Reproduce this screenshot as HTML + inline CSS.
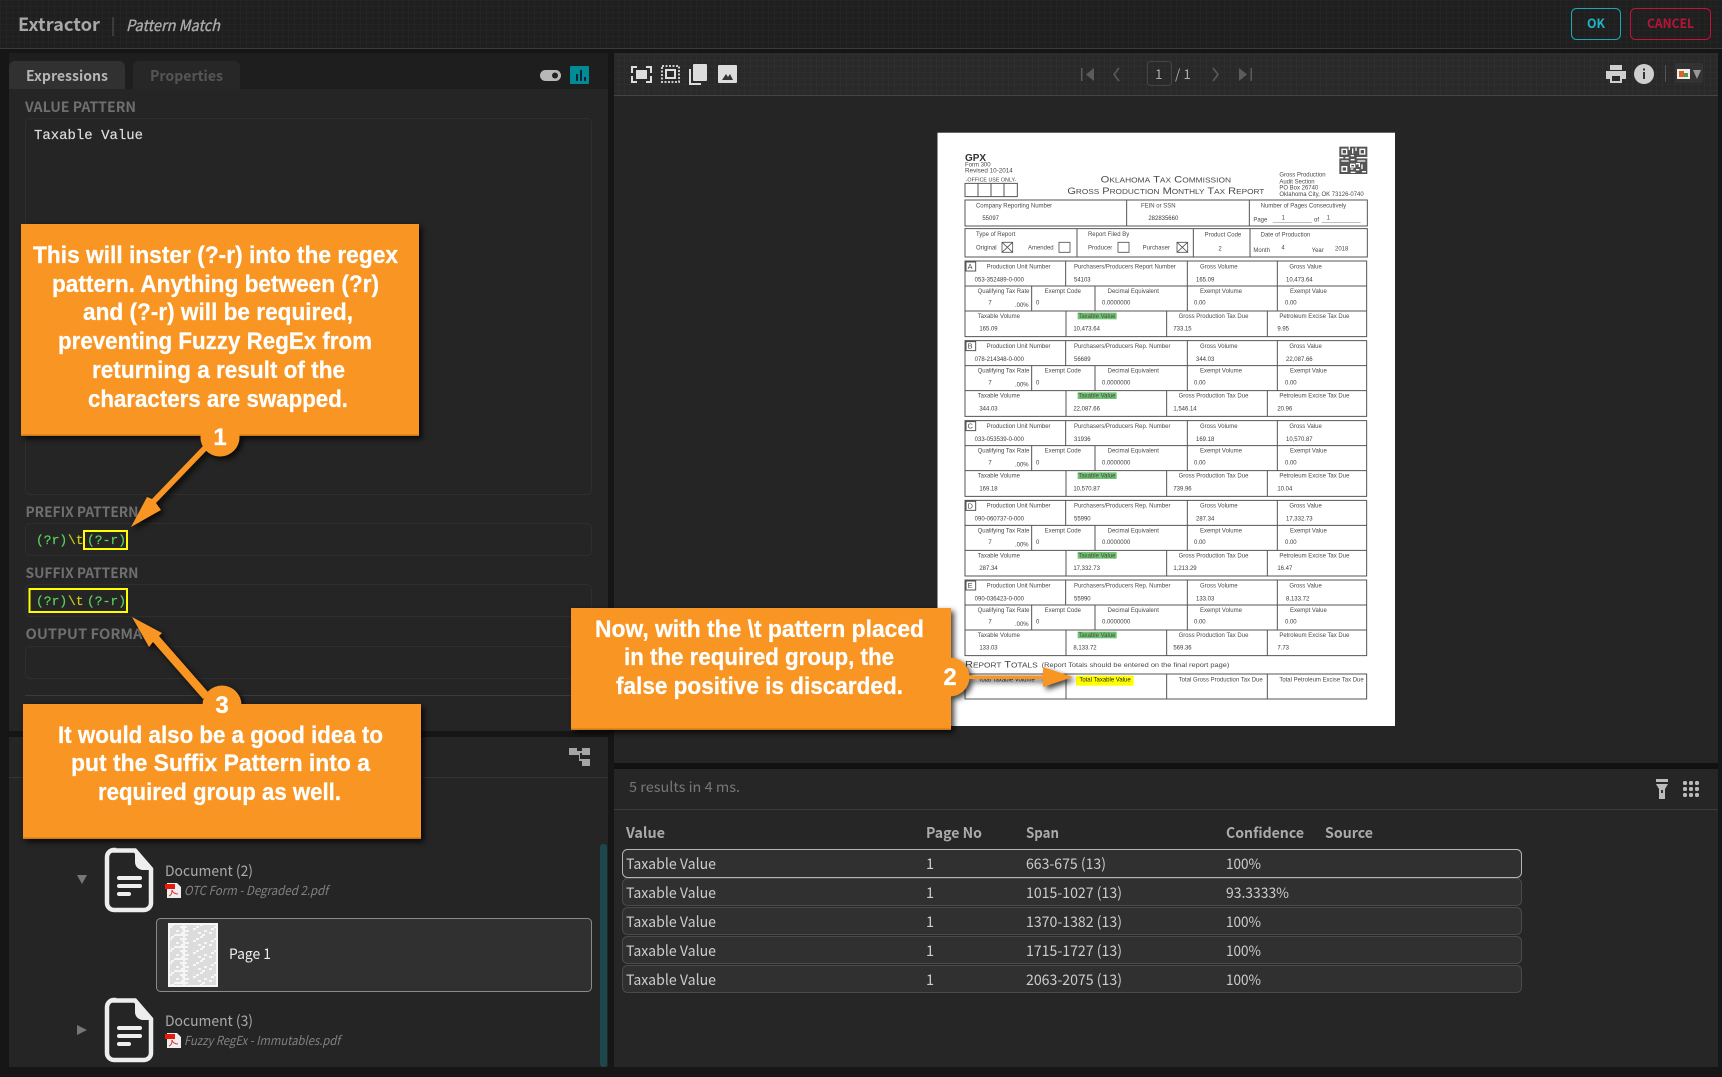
<!DOCTYPE html>
<html><head><meta charset="utf-8"><title>Extractor</title>
<style>
html,body{margin:0;padding:0;background:#161616;width:1722px;height:1077px;overflow:hidden}
svg{display:block;position:absolute;left:0;top:0}
text{font-family:"Noto Sans CJK JP","Liberation Sans",sans-serif;white-space:pre}
.m{font-family:"Liberation Mono",monospace;font-size:13px;stroke-width:.2}
.gr{fill:#5cd05c;stroke:#5cd05c}
.ye{fill:#c8c81e;stroke:#c8c81e}
.o{font-family:"Liberation Sans",sans-serif;font-weight:700;font-size:24px;fill:#fff;stroke:#fff;stroke-width:.25}
.lb{font-weight:700;font-size:14px;fill:#6f6f6f}
.t{font-size:14.5px;fill:#ccc}
.h{font-size:14.5px;font-weight:700;fill:#aaa}
.f text{font-family:"Liberation Sans",sans-serif;font-size:18px;fill:#4a4a4a}
.f .v{fill:#3c3c3c}
.sh{filter:drop-shadow(3px 3px 3px rgba(0,0,0,.75))}
</style></head><body>
<svg width="1722" height="1077" viewBox="0 0 1722 1077" xmlns="http://www.w3.org/2000/svg">
<defs>
<pattern id="g" width="6" height="6" patternUnits="userSpaceOnUse"><path d="M0 .5H6M.5 0V6" stroke="#fff" stroke-opacity=".022" fill="none"/></pattern>
<filter id="bl" x="-2%" y="-2%" width="104%" height="104%"><feGaussianBlur stdDeviation="1.1"/></filter>
<pattern id="th" width="46" height="12" patternUnits="userSpaceOnUse"><path d="M1 1H16M19 1H33M36 1H45M3 3H12M15 3H30M34 3H42M1 5H9M12 5H27M30 5H44M5 7H20M23 7H38M41 7H45M1 9H14M17 9H25M28 9H43M4 11H18M21 11H36" stroke="#b0b0b0" stroke-width=".8"/></pattern>
</defs>
<rect width="1722" height="1077" fill="#161616"/>
<!-- title bar -->
<rect width="1722" height="48" fill="#1f1f1f"/><rect width="1722" height="48" fill="url(#g)"/>
<rect y="48" width="1722" height="1" fill="#3a3a3a"/>
<text x="18" y="31" font-size="18" font-weight="700" fill="#a8a8a8" textLength="82" lengthAdjust="spacingAndGlyphs">Extractor</text>
<rect x="112.500" y="17" width="1" height="19" fill="#555"/>
<text x="126" y="31" font-size="15.500" font-style="italic" fill="#aaa" stroke="#aaa" stroke-width=".35" textLength="94" lengthAdjust="spacingAndGlyphs">Pattern Match</text>
<rect x="1571.500" y="8.500" width="49" height="31" rx="5" fill="none" stroke="#1ba9b8"/>
<text x="1587" y="28" font-size="13" font-weight="700" fill="#1fb5c4" textLength="18" lengthAdjust="spacingAndGlyphs">OK</text>
<rect x="1630.500" y="8.500" width="80" height="31" rx="5" fill="none" stroke="#c0143c"/>
<text x="1647" y="28" font-size="13" font-weight="700" fill="#b81438" textLength="47" lengthAdjust="spacingAndGlyphs">CANCEL</text>

<!-- left top panel -->
<rect x="9" y="53" width="599" height="678" fill="#252525"/>
<rect x="9" y="53" width="599" height="36" fill="#1e1e1e"/>
<path d="M9 89V67a6 6 0 0 1 6-6H119a6 6 0 0 1 6 6V89Z" fill="#313131"/>
<path d="M133 89V67a6 6 0 0 1 6-6H234a6 6 0 0 1 6 6V89Z" fill="#272727"/>
<text x="26" y="81" font-size="14.500" font-weight="700" fill="#b5b5b5" textLength="82" lengthAdjust="spacingAndGlyphs">Expressions</text>
<text x="150" y="81" font-size="14.500" font-weight="700" fill="#555" textLength="73" lengthAdjust="spacingAndGlyphs">Properties</text>
<rect x="540" y="70" width="21" height="11" rx="5.500" fill="#b8b8b8"/><circle cx="555" cy="75.500" r="3" fill="#222"/>
<rect x="570" y="66" width="19" height="18" rx="1" fill="#008c96"/>
<path d="M576 81V74h2v7ZM580 81V70h2v11ZM584 81V77h2v4Z" fill="#123"/>
<text class="lb" x="25" y="112" textLength="111" lengthAdjust="spacingAndGlyphs">VALUE PATTERN</text>
<rect x="25.500" y="118.500" width="566" height="376" rx="5" fill="none" stroke="#2e2e2e"/>
<text class="m" x="34" y="139" fill="#ddd" stroke="#ddd" style="font-size:14px" textLength="109" lengthAdjust="spacingAndGlyphs">Taxable Value</text>
<text class="lb" x="25.500" y="517" textLength="113" lengthAdjust="spacingAndGlyphs">PREFIX PATTERN</text>
<rect x="25.500" y="523.500" width="566" height="32" rx="5" fill="none" stroke="#2e2e2e"/>
<text class="m gr" x="36" y="544">(?r)</text><text class="m ye" x="68" y="544">\t</text><text class="m gr" x="87" y="544">(?-r)</text>
<rect x="84" y="531" width="43" height="18" fill="none" stroke="#ff0" stroke-width="2"/>
<text class="lb" x="25.500" y="578" textLength="113" lengthAdjust="spacingAndGlyphs">SUFFIX PATTERN</text>
<rect x="25.500" y="584.500" width="566" height="32" rx="5" fill="none" stroke="#2e2e2e"/>
<text class="m gr" x="36" y="605">(?r)</text><text class="m ye" x="68" y="605">\t</text><text class="m gr" x="87" y="605">(?-r)</text>
<rect x="29.500" y="589" width="97.500" height="23" fill="none" stroke="#ff0" stroke-width="2"/>
<text class="lb" x="25.500" y="639" textLength="125" lengthAdjust="spacingAndGlyphs">OUTPUT FORMAT</text>
<rect x="25.500" y="646.500" width="566" height="32" rx="5" fill="none" stroke="#2e2e2e"/>
<rect x="25" y="695" width="566" height="1" fill="#3a3a3a"/>

<!-- left bottom panel -->
<rect x="9" y="737" width="599" height="330" fill="#252525"/>
<rect x="9" y="777" width="599" height="1" fill="#333"/>
<path d="M569 748h8v3h5v-3h8v7h-8v-2h-2v6h2v-2h0v2h8v7h-8v-5h-3V755h-2h-8Z" fill="#a5a5a5"/>
<rect x="600" y="844" width="7" height="223" rx="3" fill="#1b484c"/>
<path d="M77 875h10l-5 9Z" fill="#777"/>
<g id="d1">
<path d="M114 850.500H135L151 869V903a7 7 0 0 1-7 7H114a7 7 0 0 1-7-7V857a7 7 0 0 1 7-7Z" fill="none" stroke="#eee" stroke-width="4.500"/>
<path d="M135 850L152 870H143a8 8 0 0 1-8-8Z" fill="#eee"/>
<path d="M119 878h21M119 886h21M119 894h10" stroke="#eee" stroke-width="4" stroke-linecap="round"/>
</g>
<text x="165" y="876" font-size="14.500" fill="#aaa" textLength="88" lengthAdjust="spacingAndGlyphs">Document (2)</text>
<path d="M167 883h10l4 4v11h-14Z" fill="#eee"/><rect x="165" y="884" width="10" height="5" fill="#e8180c"/><path d="M172 890c0 4-1 5-3 6M172 890c1 3 3 4 6 4" stroke="#d33" fill="none"/>
<text x="184" y="895" font-size="12.500" font-style="italic" fill="#808080" textLength="144" lengthAdjust="spacingAndGlyphs">OTC Form - Degraded 2.pdf</text>
<rect x="156.500" y="918.500" width="435" height="73" rx="4" fill="#303030" stroke="#8a8a8a"/>
<rect x="168" y="923" width="50" height="64" fill="#f6f6f6"/><rect x="170" y="925" width="46" height="60" fill="url(#th)"/>
<text x="229" y="959" font-size="14.500" fill="#eee" textLength="42" lengthAdjust="spacingAndGlyphs">Page 1</text>
<path d="M77 1025v10l10-5Z" fill="#777"/>
<use href="#d1" y="150"/>
<text x="165" y="1026" font-size="14.500" fill="#aaa" textLength="88" lengthAdjust="spacingAndGlyphs">Document (3)</text>
<path d="M167 1033h10l4 4v11h-14Z" fill="#eee"/><rect x="165" y="1034" width="10" height="5" fill="#e8180c"/><path d="M172 1040c0 4-1 5-3 6M172 1040c1 3 3 4 6 4" stroke="#d33" fill="none"/>
<text x="184" y="1045" font-size="12.500" font-style="italic" fill="#808080" textLength="156" lengthAdjust="spacingAndGlyphs">Fuzzy RegEx - Immutables.pdf</text>

<!-- right viewer -->
<rect x="614" y="53" width="1104" height="710" fill="#252525"/>
<rect x="614" y="53" width="1104" height="42" fill="#292929"/><rect x="614" y="53" width="1104" height="42" fill="url(#g)"/>
<rect x="614" y="95" width="1104" height="1" fill="#444"/>
<!-- toolbar left icons -->
<path d="M632 73v-6h5M646 67h5v6M651 76v6h-5M637 82h-5v-6" fill="none" stroke="#ddd" stroke-width="2"/><rect x="636" y="70" width="11" height="9" fill="#ddd"/>
<rect x="662" y="66" width="17" height="16" fill="none" stroke="#ccc" stroke-width="2" stroke-dasharray="2 1.500"/><rect x="666" y="70" width="9" height="8" fill="none" stroke="#ddd" stroke-width="2"/>
<path d="M690 69v15h11" fill="none" stroke="#ddd" stroke-width="2"/><rect x="693" y="64" width="14" height="17" rx="1" fill="#ddd"/>
<rect x="718" y="65" width="19" height="18" rx="1" fill="#ddd"/><path d="M722 80l4-6 2 3 2-3 3 6Z" fill="#333"/>
<!-- nav -->
<g fill="#5c5c5c">
<rect x="1081" y="68" width="1.500" height="13"/><path d="M1094 68v13l-8-6.500Z"/>
<path d="M1119 68l-5 6.500 5 6.500" fill="none" stroke="#5c5c5c" stroke-width="1.500"/>
<path d="M1213 68l5 6.500-5 6.500" fill="none" stroke="#5c5c5c" stroke-width="1.500"/>
<rect x="1250.500" y="68" width="1.500" height="13"/><path d="M1239 68v13l8-6.500Z"/>
</g>
<rect x="1147.500" y="61.500" width="24" height="24" rx="3" fill="none" stroke="#444"/>
<text x="1155" y="79" font-size="13.500" fill="#aaa">1</text>
<text x="1175" y="79" font-size="13.500" fill="#aaa">/ 1</text>
<!-- toolbar right -->
<path d="M1610 65h12v5h-12ZM1606 71h20v8h-4v4h-12v-4h-4ZM1612 76v5h8v-5Z" fill="#cfcfcf" fill-rule="evenodd"/>
<circle cx="1644" cy="74" r="10" fill="#cfcfcf"/><rect x="1643" y="72" width="2" height="7" fill="#333"/><rect x="1643" y="68.500" width="2" height="2" fill="#333"/>
<rect x="1665" y="65" width="1" height="17" fill="#555"/>
<rect x="1675" y="63" width="28" height="20" rx="2" fill="#333"/>
<rect x="1677" y="69" width="13" height="10" fill="#eee"/><rect x="1679" y="71" width="5" height="6" fill="#d5662a"/><rect x="1684" y="73" width="4" height="4" fill="#5a9a3a"/>
<path d="M1693 70h8l-4 9Z" fill="#999"/>

<!-- document -->
<rect x="937.500" y="132.700" width="457.500" height="593.300" fill="#fff"/>
<g class="f" transform="translate(930 125) scale(.33333)" filter="url(#bl)">
<text x="105" y="108" style="font-size:30px;font-weight:700;fill:#333">GPX</text>
<text x="105" y="124" style="font-size:18px">Form 300</text><text x="105" y="142" style="font-size:19px">Revised 10-2014</text>
<text x="107" y="170" style="font-size:16px">-OFFICE USE ONLY-</text>
<path d="M105 175H262V215H105ZM144 175V215M183 175V215M222 175V215" fill="none" stroke="#555" stroke-width="3"/>
<text x="512" y="172" style="font-size:28px;font-variant:small-caps" textLength="391" lengthAdjust="spacingAndGlyphs">Oklahoma Tax Commission</text>
<text x="412" y="207" style="font-size:28px;font-variant:small-caps" textLength="591" lengthAdjust="spacingAndGlyphs">Gross Production Monthly Tax Report</text>
<text x="1048" y="155" style="font-size:18px">Gross Production</text><text x="1048" y="175" style="font-size:18px">Audit Section</text><text x="1048" y="194" style="font-size:18px">PO Box 26740</text><text x="1048" y="213" style="font-size:18px">Oklahoma City, OK 73126-0740</text>
<rect x="1228" y="65" width="84" height="82" fill="#555"/><path d="M1236 73h14v14h-14ZM1290 73h14v14h-14ZM1236 125h14v14h-14ZM1258 65v10M1268 70v16M1278 68v10M1228 98h12M1246 98h10M1262 92h10M1280 98h32M1234 108h22M1262 104h12M1282 108h24M1262 118h12v8h-12ZM1262 132h8M1278 116h10v10M1296 118v14M1278 134h10M1262 142h14M1296 140h12" fill="none" stroke="#fff" stroke-width="4"/>
<path d="M105 225H1312V303H105ZM590 225V303M958 225V303M105 311H1312V396H105ZM441 311V396M790 311V396M960 311V396" fill="none" stroke="#555" stroke-width="3"/>
<text x="138" y="248">Company Reporting Number</text><text x="157" y="285" class="v">55097</text>
<text x="633" y="248">FEIN or SSN</text><text x="655" y="285" class="v">282835660</text>
<text x="992" y="248">Number of Pages Consecutively</text><text x="970" y="290">Page</text><text x="1055" y="283">1</text><text x="1152" y="290">of</text><text x="1190" y="283">1</text>
<path d="M1028 293H1145M1175 293H1292" stroke="#999" stroke-width="2"/>
<text x="138" y="333">Type of Report</text><text x="138" y="374">Original</text><text x="294" y="374">Amended</text>
<text x="474" y="333">Report Filed By</text><text x="474" y="374">Producer</text><text x="638" y="374">Purchaser</text>
<text x="824" y="335">Product Code</text><text x="865" y="376">2</text>
<text x="992" y="335">Date of Production</text><text x="970" y="381">Month</text><text x="1054" y="374">4</text><text x="1145" y="381">Year</text><text x="1215" y="377">2018</text>
<path d="M216 352H248V382H216ZM216 352L248 382M248 352L216 382M387 352H420V382H387ZM564 352H597V382H564ZM741 352H773V382H741ZM741 352L773 382M773 352L741 382" fill="none" stroke="#555" stroke-width="2.500"/>
<path id="sec" d="M105 408H1310V635H105ZM105 483H1310M105 558H1310M407 408V483M772 408V558M1042 408V558M305 483V558M495 483V558M408 558V635M710 558V635M1012 558V635M108 411H137V438H108Z" fill="none" stroke="#555" stroke-width="3"/>
<use href="#sec" y="239"/><use href="#sec" y="479"/><use href="#sec" y="718"/><use href="#sec" y="957"/>
<g id="s0"><rect x="443" y="563" width="117" height="20" fill="#6fc36f"/></g>
<use href="#s0" y="239"/><use href="#s0" y="479"/><use href="#s0" y="718"/><use href="#s0" y="957"/>
<!-- A -->
<g><text x="113" y="432" style="font-size:22px">A</text><text x="170" y="430">Production Unit Number</text><text x="432" y="430">Purchasers/Producers Report Number</text><text x="810" y="430">Gross Volume</text><text x="1078" y="430">Gross Value</text>
<text x="134" y="469" class="v">053-352489-0-000</text><text x="432" y="469" class="v">54103</text><text x="798" y="469" class="v">165.09</text><text x="1068" y="469" class="v">10,473.64</text>
<text x="143" y="504">Qualifying Tax Rate</text><text x="344" y="504">Exempt Code</text><text x="533" y="504">Decimal Equivalent</text><text x="810" y="504">Exempt Volume</text><text x="1080" y="504">Exempt Value</text>
<text x="175" y="539" class="v">7</text><text x="255" y="546" class="v">.00%</text><text x="318" y="539" class="v">0</text><text x="516" y="539" class="v">0.0000000</text><text x="792" y="539" class="v">0.00</text><text x="1065" y="539" class="v">0.00</text>
<text x="143" y="579">Taxable Volume</text><text x="445" y="579">Taxable Value</text><text x="746" y="579">Gross Production Tax Due</text><text x="1048" y="579">Petroleum Excise Tax Due</text>
<text x="148" y="617" class="v">165.09</text><text x="430" y="617" class="v">10,473.64</text><text x="730" y="617" class="v">733.15</text><text x="1042" y="617" class="v">9.95</text></g>
<!-- B -->
<g transform="translate(0 239)"><text x="113" y="432" style="font-size:22px">B</text><text x="170" y="430">Production Unit Number</text><text x="432" y="430">Purchasers/Producers Rep. Number</text><text x="810" y="430">Gross Volume</text><text x="1078" y="430">Gross Value</text>
<text x="134" y="469" class="v">078-214348-0-000</text><text x="432" y="469" class="v">56689</text><text x="798" y="469" class="v">344.03</text><text x="1068" y="469" class="v">22,087.66</text>
<text x="143" y="504">Qualifying Tax Rate</text><text x="344" y="504">Exempt Code</text><text x="533" y="504">Decimal Equivalent</text><text x="810" y="504">Exempt Volume</text><text x="1080" y="504">Exempt Value</text>
<text x="175" y="539" class="v">7</text><text x="255" y="546" class="v">.00%</text><text x="318" y="539" class="v">0</text><text x="516" y="539" class="v">0.0000000</text><text x="792" y="539" class="v">0.00</text><text x="1065" y="539" class="v">0.00</text>
<text x="143" y="579">Taxable Volume</text><text x="445" y="579">Taxable Value</text><text x="746" y="579">Gross Production Tax Due</text><text x="1048" y="579">Petroleum Excise Tax Due</text>
<text x="148" y="617" class="v">344.03</text><text x="430" y="617" class="v">22,087.66</text><text x="730" y="617" class="v">1,546.14</text><text x="1042" y="617" class="v">20.96</text></g>
<!-- C -->
<g transform="translate(0 479)"><text x="113" y="432" style="font-size:22px">C</text><text x="170" y="430">Production Unit Number</text><text x="432" y="430">Purchasers/Producers Rep. Number</text><text x="810" y="430">Gross Volume</text><text x="1078" y="430">Gross Value</text>
<text x="134" y="469" class="v">033-053539-0-000</text><text x="432" y="469" class="v">31936</text><text x="798" y="469" class="v">169.18</text><text x="1068" y="469" class="v">10,570.87</text>
<text x="143" y="504">Qualifying Tax Rate</text><text x="344" y="504">Exempt Code</text><text x="533" y="504">Decimal Equivalent</text><text x="810" y="504">Exempt Volume</text><text x="1080" y="504">Exempt Value</text>
<text x="175" y="539" class="v">7</text><text x="255" y="546" class="v">.00%</text><text x="318" y="539" class="v">0</text><text x="516" y="539" class="v">0.0000000</text><text x="792" y="539" class="v">0.00</text><text x="1065" y="539" class="v">0.00</text>
<text x="143" y="579">Taxable Volume</text><text x="445" y="579">Taxable Value</text><text x="746" y="579">Gross Production Tax Due</text><text x="1048" y="579">Petroleum Excise Tax Due</text>
<text x="148" y="617" class="v">169.18</text><text x="430" y="617" class="v">10,570.87</text><text x="730" y="617" class="v">739.96</text><text x="1042" y="617" class="v">10.04</text></g>
<!-- D -->
<g transform="translate(0 718)"><text x="113" y="432" style="font-size:22px">D</text><text x="170" y="430">Production Unit Number</text><text x="432" y="430">Purchasers/Producers Rep. Number</text><text x="810" y="430">Gross Volume</text><text x="1078" y="430">Gross Value</text>
<text x="134" y="469" class="v">090-060737-0-000</text><text x="432" y="469" class="v">55990</text><text x="798" y="469" class="v">287.34</text><text x="1068" y="469" class="v">17,332.73</text>
<text x="143" y="504">Qualifying Tax Rate</text><text x="344" y="504">Exempt Code</text><text x="533" y="504">Decimal Equivalent</text><text x="810" y="504">Exempt Volume</text><text x="1080" y="504">Exempt Value</text>
<text x="175" y="539" class="v">7</text><text x="255" y="546" class="v">.00%</text><text x="318" y="539" class="v">0</text><text x="516" y="539" class="v">0.0000000</text><text x="792" y="539" class="v">0.00</text><text x="1065" y="539" class="v">0.00</text>
<text x="143" y="579">Taxable Volume</text><text x="445" y="579">Taxable Value</text><text x="746" y="579">Gross Production Tax Due</text><text x="1048" y="579">Petroleum Excise Tax Due</text>
<text x="148" y="617" class="v">287.34</text><text x="430" y="617" class="v">17,332.73</text><text x="730" y="617" class="v">1,213.29</text><text x="1042" y="617" class="v">16.47</text></g>
<!-- E -->
<g transform="translate(0 957)"><text x="113" y="432" style="font-size:22px">E</text><text x="170" y="430">Production Unit Number</text><text x="432" y="430">Purchasers/Producers Rep. Number</text><text x="810" y="430">Gross Volume</text><text x="1078" y="430">Gross Value</text>
<text x="134" y="469" class="v">090-036423-0-000</text><text x="432" y="469" class="v">55990</text><text x="798" y="469" class="v">133.03</text><text x="1068" y="469" class="v">8,133.72</text>
<text x="143" y="504">Qualifying Tax Rate</text><text x="344" y="504">Exempt Code</text><text x="533" y="504">Decimal Equivalent</text><text x="810" y="504">Exempt Volume</text><text x="1080" y="504">Exempt Value</text>
<text x="175" y="539" class="v">7</text><text x="255" y="546" class="v">.00%</text><text x="318" y="539" class="v">0</text><text x="516" y="539" class="v">0.0000000</text><text x="792" y="539" class="v">0.00</text><text x="1065" y="539" class="v">0.00</text>
<text x="143" y="579">Taxable Volume</text><text x="445" y="579">Taxable Value</text><text x="746" y="579">Gross Production Tax Due</text><text x="1048" y="579">Petroleum Excise Tax Due</text>
<text x="148" y="617" class="v">133.03</text><text x="430" y="617" class="v">8,133.72</text><text x="730" y="617" class="v">569.36</text><text x="1042" y="617" class="v">7.73</text></g>
<!-- totals -->
<text x="105" y="1627" style="font-size:28px;font-variant:small-caps;fill:#444" textLength="218" lengthAdjust="spacingAndGlyphs">Report Totals</text>
<text x="335" y="1626" style="font-size:20px" textLength="563" lengthAdjust="spacingAndGlyphs">(Report Totals should be entered on the final report page)</text>
<path d="M105 1647H1310V1722H105ZM408 1647V1722M710 1647V1722M1012 1647V1722" fill="none" stroke="#555" stroke-width="3"/>
<rect x="438" y="1652" width="173" height="30" fill="#ff0"/>
<text x="145" y="1670" style="fill:#333">Total Taxable Volume</text><text x="448" y="1670" style="fill:#222">Total Taxable Value</text><text x="746" y="1670">Total Gross Production Tax Due</text><text x="1048" y="1670">Total Petroleum Excise Tax Due</text>
</g>

<!-- results -->
<rect x="614" y="763" width="1104" height="6" fill="#111"/>
<rect x="614" y="769" width="1104" height="298" fill="#262626"/>
<rect x="614" y="809" width="1104" height="1" fill="#3a3a3a"/>
<text x="629" y="792" font-size="14" fill="#777" textLength="111" lengthAdjust="spacingAndGlyphs">5 results in 4 ms.</text>
<path d="M1656 779h12v3h-12ZM1656 784h12l-3 5v10h-6V789Z" fill="#bbb"/><rect x="1661" y="790" width="2" height="3" fill="#333"/>
<g fill="#bbb"><rect x="1683" y="781" width="4" height="4" rx="1.500"/><rect x="1689" y="781" width="4" height="4" rx="1.500"/><rect x="1695" y="781" width="4" height="4" rx="1.500"/><rect x="1683" y="787" width="4" height="4" rx="1.500"/><rect x="1689" y="787" width="4" height="4" rx="1.500"/><rect x="1695" y="787" width="4" height="4" rx="1.500"/><rect x="1683" y="793" width="4" height="4" rx="1.500"/><rect x="1689" y="793" width="4" height="4" rx="1.500"/><rect x="1695" y="793" width="4" height="4" rx="1.500"/></g>
<g class="h"><text class="h" x="626" y="838" textLength="39" lengthAdjust="spacingAndGlyphs">Value</text><text class="h" x="926" y="838" textLength="56" lengthAdjust="spacingAndGlyphs">Page No</text><text class="h" x="1026" y="838" textLength="33" lengthAdjust="spacingAndGlyphs">Span</text><text class="h" x="1226" y="838" textLength="78" lengthAdjust="spacingAndGlyphs">Confidence</text><text class="h" x="1325" y="838" textLength="48" lengthAdjust="spacingAndGlyphs">Source</text></g>
<rect x="622.500" y="849.500" width="899" height="28" rx="5" fill="#303030" stroke="#b5b5b5"/>
<rect x="622.500" y="878.500" width="899" height="27" rx="5" fill="#303030" stroke="#4a4a4a"/>
<rect x="622.500" y="907.500" width="899" height="27" rx="5" fill="#303030" stroke="#4a4a4a"/>
<rect x="622.500" y="936.500" width="899" height="27" rx="5" fill="#303030" stroke="#4a4a4a"/>
<rect x="622.500" y="965.500" width="899" height="27" rx="5" fill="#303030" stroke="#4a4a4a"/>
<text class="t" x="626" y="869" textLength="90" lengthAdjust="spacingAndGlyphs">Taxable Value</text><text class="t" x="926" y="869">1</text><text class="t" x="1026" y="869" textLength="80" lengthAdjust="spacingAndGlyphs">663-675 (13)</text><text class="t" x="1226" y="869" textLength="35" lengthAdjust="spacingAndGlyphs">100%</text>
<text class="t" x="626" y="898" textLength="90" lengthAdjust="spacingAndGlyphs">Taxable Value</text><text class="t" x="926" y="898">1</text><text class="t" x="1026" y="898" textLength="96" lengthAdjust="spacingAndGlyphs">1015-1027 (13)</text><text class="t" x="1226" y="898" textLength="63" lengthAdjust="spacingAndGlyphs">93.3333%</text>
<text class="t" x="626" y="927" textLength="90" lengthAdjust="spacingAndGlyphs">Taxable Value</text><text class="t" x="926" y="927">1</text><text class="t" x="1026" y="927" textLength="96" lengthAdjust="spacingAndGlyphs">1370-1382 (13)</text><text class="t" x="1226" y="927" textLength="35" lengthAdjust="spacingAndGlyphs">100%</text>
<text class="t" x="626" y="956" textLength="90" lengthAdjust="spacingAndGlyphs">Taxable Value</text><text class="t" x="926" y="956">1</text><text class="t" x="1026" y="956" textLength="96" lengthAdjust="spacingAndGlyphs">1715-1727 (13)</text><text class="t" x="1226" y="956" textLength="35" lengthAdjust="spacingAndGlyphs">100%</text>
<text class="t" x="626" y="985" textLength="90" lengthAdjust="spacingAndGlyphs">Taxable Value</text><text class="t" x="926" y="985">1</text><text class="t" x="1026" y="985" textLength="96" lengthAdjust="spacingAndGlyphs">2063-2075 (13)</text><text class="t" x="1226" y="985" textLength="35" lengthAdjust="spacingAndGlyphs">100%</text>

<!-- callouts -->
<g class="sh" fill="#f99522">
<rect x="21" y="224" width="398" height="212"/>
<circle cx="220" cy="437" r="19.500"/>
<path d="M207 450L156 503L161 510L131 527L147 497L152 499L203 446Z"/>
</g>
<rect x="21" y="434.500" width="398" height="1.500" fill="#c97a17"/>
<circle cx="220" cy="437" r="19.500" fill="#f99522"/>
<g class="sh" fill="#f99522">
<path d="M208 692L159 636L162 633L132 617L149 647L153 642L203 699Z"/>
<circle cx="222" cy="705" r="19.500"/>
<rect x="23" y="704" width="398" height="135"/>
</g>
<rect x="23" y="837.500" width="398" height="1.500" fill="#c97a17"/>
<g class="sh" fill="#f99522">
<rect x="571" y="608" width="380" height="122"/>
<circle cx="950" cy="677" r="19.500"/>
<path d="M965 675.500H1043V667L1073 677L1043 687V679H965Z"/>
</g>
<rect x="571" y="728.500" width="380" height="1.500" fill="#c97a17"/>
<text class="o" x="33" y="263" textLength="365" lengthAdjust="spacingAndGlyphs">This will inster (?-r) into the regex</text>
<text class="o" x="52" y="292" textLength="327" lengthAdjust="spacingAndGlyphs">pattern. Anything between (?r)</text>
<text class="o" x="83" y="320" textLength="270" lengthAdjust="spacingAndGlyphs">and (?-r) will be required,</text>
<text class="o" x="58" y="349" textLength="314" lengthAdjust="spacingAndGlyphs">preventing Fuzzy RegEx from</text>
<text class="o" x="92" y="378" textLength="253" lengthAdjust="spacingAndGlyphs">returning a result of the</text>
<text class="o" x="88" y="407" textLength="260" lengthAdjust="spacingAndGlyphs">characters are swapped.</text>
<text class="o" x="220" y="445" text-anchor="middle">1</text>
<text class="o" x="595" y="637" textLength="329" lengthAdjust="spacingAndGlyphs">Now, with the \t pattern placed</text>
<text class="o" x="624" y="665" textLength="270" lengthAdjust="spacingAndGlyphs">in the required group, the</text>
<text class="o" x="616" y="694" textLength="287" lengthAdjust="spacingAndGlyphs">false positive is discarded.</text>
<text class="o" x="950" y="685" text-anchor="middle">2</text>
<text class="o" x="222" y="713" text-anchor="middle">3</text>
<text class="o" x="58" y="743" textLength="325" lengthAdjust="spacingAndGlyphs">It would also be a good idea to</text>
<text class="o" x="71" y="771" textLength="299" lengthAdjust="spacingAndGlyphs">put the Suffix Pattern into a</text>
<text class="o" x="98" y="800" textLength="243" lengthAdjust="spacingAndGlyphs">required group as well.</text>
</svg>
</body></html>
